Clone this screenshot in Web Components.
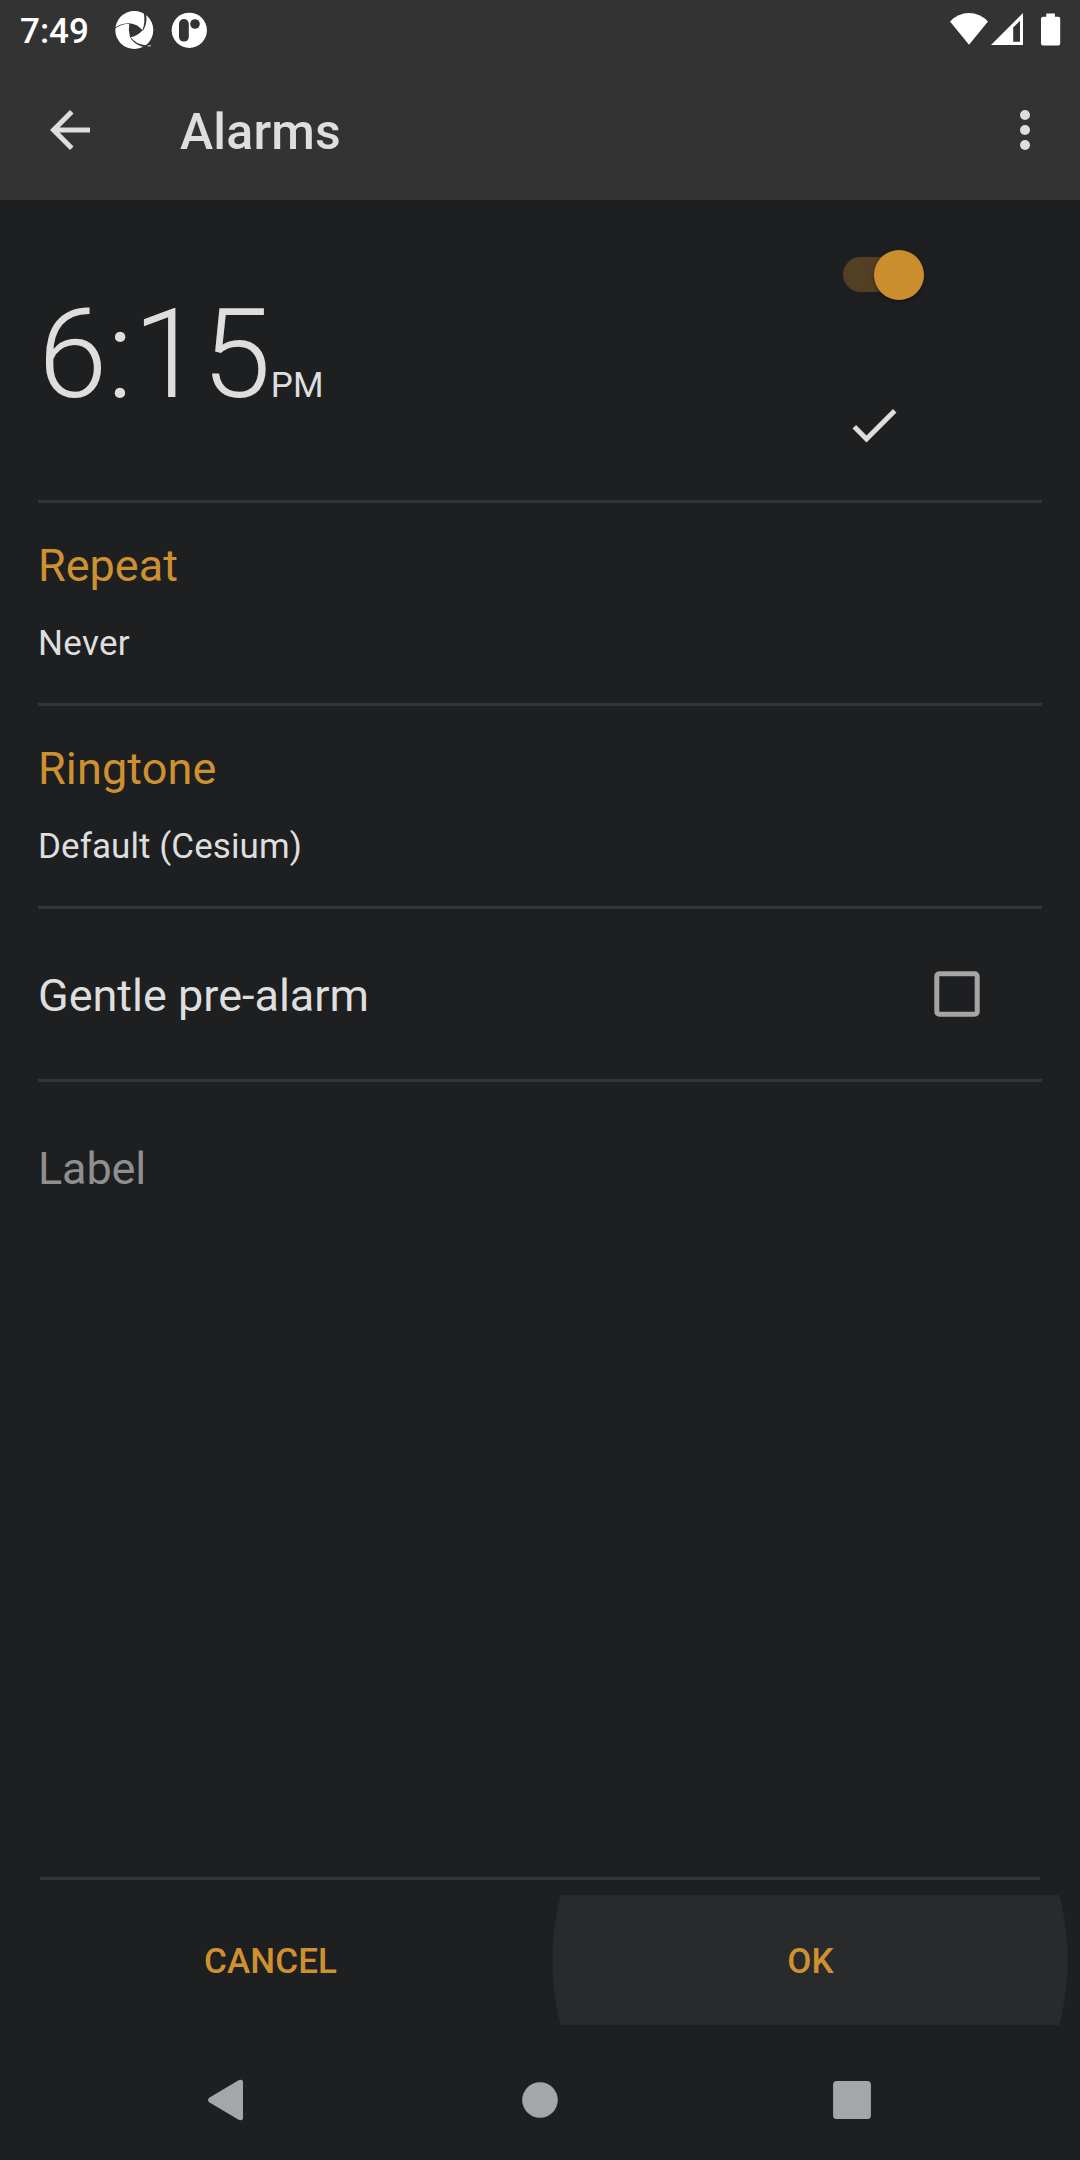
<!DOCTYPE html>
<html lang="en">
<head>
<meta charset="utf-8">
<title>Alarms</title>
<style>
html,body{margin:0;padding:0;background:#1e1f21}
body{width:1080px;height:2160px;overflow:hidden;font-family:Roboto,"Liberation Sans",sans-serif;color:#dedede}
</style>
</head>
<body>
<alarm-screen>
  <status-bar slot="top">7:49</status-bar>
  <app-bar slot="top">Alarms</app-bar>
  <alarm-time meridiem="PM">6:15</alarm-time>
  <setting-row heading="Repeat" style="--value-spacing:.3px">Never</setting-row>
  <setting-row heading="Ringtone" style="--heading-spacing:.12px;--value-spacing:.08px">Default (Cesium)</setting-row>
  <check-row>Gentle pre-alarm</check-row>
  <label-field>Label</label-field>
  <dialog-actions slot="bottom">
    <flat-button>CANCEL</flat-button>
    <flat-button pressed>OK</flat-button>
  </dialog-actions>
  <nav-bar slot="bottom"></nav-bar>
</alarm-screen>
<script>
const define = (name, html) => customElements.define(name, class extends HTMLElement {
  constructor() {
    super();
    const t = document.createElement('template');
    t.innerHTML = typeof html === 'function' ? html(this) : html;
    this.attachShadow({ mode: 'open' }).append(t.content.cloneNode(true));
  }
});

define('alarm-screen', `<style>
:host{display:flex;flex-direction:column;width:1080px;height:2160px;background:#1e1f21}
main{flex:1;padding:0 38px;min-height:0}
</style><slot name="top"></slot><main><slot></slot></main><slot name="bottom"></slot>`);

define('status-bar', `<style>
:host{display:flex;box-sizing:border-box;height:60px;flex:none;background:#333;color:#fff;font-size:35px;font-weight:500;line-height:41px;padding-left:20px}
span{width:90px;padding-top:11px}
svg{display:block;height:60px}
.sys{margin-left:auto}
</style><span><slot></slot></span>
<svg width="110" height="60" viewBox="110 0 110 60">
  <circle cx="134.3" cy="30" r="19" fill="#fff"/>
  <g transform="scale(.33333)" fill="#333">
    <path d="M388 70Q411 72 428 91Q412 109 390 112Q384 91 388 70Z"/>
    <path d="M344 83Q364 70 389 69L389 71.5Q366 71 344 86Z"/>
    <path d="M427 91Q437 67 431 36L436 38L439 48Q442 71 428.500 93Z"/>
    <path d="M390 110Q398 130 429 141L446 139L436 135.500Q406 132 391.500 110Z"/>
    <path d="M434 141L462 126L462 150L428 150Z"/>
    <path d="M443 136h10v3h-10z" fill="#ddd"/>
  </g>
  <circle cx="189.3" cy="30.3" r="17.6" fill="#fff"/>
  <rect x="179" y="19" width="9.8" height="22.6" rx="4.9" fill="#333"/>
  <circle cx="195" cy="24" r="4.8" fill="#333"/>
</svg>
<svg class="sys" width="140" height="60" viewBox="940 0 140 60" fill="#fff">
  <path d="M969 44.7L950 21.5Q958 13 969 13T988 21.5Z"/>
  <path fill-rule="evenodd" d="M991 45L1023 13V45ZM1013.2 27.5V41.7H1020V20.8Z"/>
  <path d="M1046.3 13.4h8.6v3.4h3.3a2 2 0 0 1 2 2v24.8a2 2 0 0 1-2 2h-15.2a2 2 0 0 1-2-2v-24.8a2 2 0 0 1 2-2h3.3z"/>
</svg>`);

define('app-bar', `<style>
:host{display:flex;box-sizing:border-box;height:140px;flex:none;background:#333;padding:40px 25px 0 40px}
h1{margin:3px 0 0 80px;font-size:50px;font-weight:500;line-height:58px;height:58px;letter-spacing:.2px}
svg{display:block;width:60px;height:60px;fill:#dedede}
.more{margin-left:auto}
</style>
<svg viewBox="0 0 24 24"><path d="M20 11H7.83l5.59-5.59L12 4l-8 8 8 8 1.41-1.41L7.83 13H20v-2z"/></svg>
<h1><slot></slot></h1>
<svg class="more" viewBox="0 0 24 24"><circle cx="12" cy="6" r="2"/><circle cx="12" cy="12" r="2"/><circle cx="12" cy="18" r="2"/></svg>`);

define('alarm-time', el => `<style>
:host{display:flex;box-sizing:border-box;height:303px;border-bottom:3px solid #343537}
.clock{display:flex;align-items:baseline;padding-top:81px}
.t{font-size:125px;font-weight:300;line-height:147px;letter-spacing:-.35px}
.m{font-size:35px;line-height:41px}
.side{display:flex;flex-direction:column;width:90px;margin:47px 113px 0 auto}
.switch{display:flex;align-items:flex-start;width:90px;height:55px}
.track{flex:none;width:76px;height:35px;border-radius:18px;background:#533f24;margin:10px 0 0 4px}
.thumb{flex:none;width:50px;height:50px;border-radius:50%;background:#cb8e2f;margin:3px 0 0 -44.7px;box-shadow:0 2px 4px rgba(0,0,0,.35)}
svg{display:block;width:60px;height:60px;margin:93px 0 0 5px;fill:#dedede}
</style>
<div class="clock"><span class="t"><slot></slot></span><span class="m">${el.getAttribute('meridiem')}</span></div>
<div class="side"><div class="switch"><div class="track"></div><div class="thumb"></div></div>
<svg viewBox="0 0 24 24"><path d="M9 16.17L4.83 12l-1.42 1.41L9 19 21 7l-1.41-1.41z"/></svg></div>`);

define('setting-row', el => `<style>
:host{display:flex;flex-direction:column;box-sizing:border-box;height:203px;padding-top:36px;gap:31px;border-bottom:3px solid #343537}
.h{font-size:45px;line-height:53px;color:#cf9130;letter-spacing:var(--heading-spacing,normal)}
.v{font-size:35px;line-height:41px;letter-spacing:var(--value-spacing,normal)}
</style><div class="h">${el.getAttribute('heading')}</div><div class="v"><slot></slot></div>`);

define('check-row', `<style>
:host{display:flex;justify-content:space-between;box-sizing:border-box;height:173px;padding-top:60px;border-bottom:3px solid #343537}
span{font-size:45px;line-height:53px}
svg{display:block;width:60px;height:60px;margin:-5px 55px 0 0}
</style><span><slot></slot></span>
<svg viewBox="0 0 60 60"><rect x="9.8" y="9.8" width="40.4" height="40.4" rx="2.5" fill="none" stroke="#a5a5a6" stroke-width="5"/></svg>`);

define('label-field', `<style>
:host{display:block;padding-top:60px;font-size:45px;line-height:53px;color:#8f8f90;letter-spacing:-.15px}
</style><slot></slot>`);

define('dialog-actions', `<style>
:host{display:block;height:148px;flex:none}
hr{border:0;height:3px;margin:0 40px 15px;background:#343537}
div{display:flex}
</style><hr><div><slot></slot></div>`);

define('flat-button', `<style>
:host{flex:1;box-sizing:border-box;height:130px;padding:46px 0 0 1px;text-align:center;font-size:35px;font-weight:500;line-height:41px;letter-spacing:.12px;color:#cf9130}
:host([pressed]){background:radial-gradient(circle at center,#282a2b 257px,transparent 258px)}
</style><slot></slot>`);

define('nav-bar', `<style>
:host{display:flex;height:135px;flex:none;justify-content:center}
svg{display:block;width:1080px;height:135px;fill:#a5a6a8}
</style><svg viewBox="0 2025 1080 135">
<path d="M209.2 2097.700L238.600 2080.300Q243 2078.700 243 2082.600V2117.400Q243 2121.300 238.600 2119.700L209.200 2102.300Q206.800 2100 209.200 2097.700Z"/>
<circle cx="540" cy="2100" r="17.8"/>
<rect x="833.1" y="2081.1" width="37.800" height="37.800" rx="3.5"/></svg>`);
</script>
</body>
</html>
